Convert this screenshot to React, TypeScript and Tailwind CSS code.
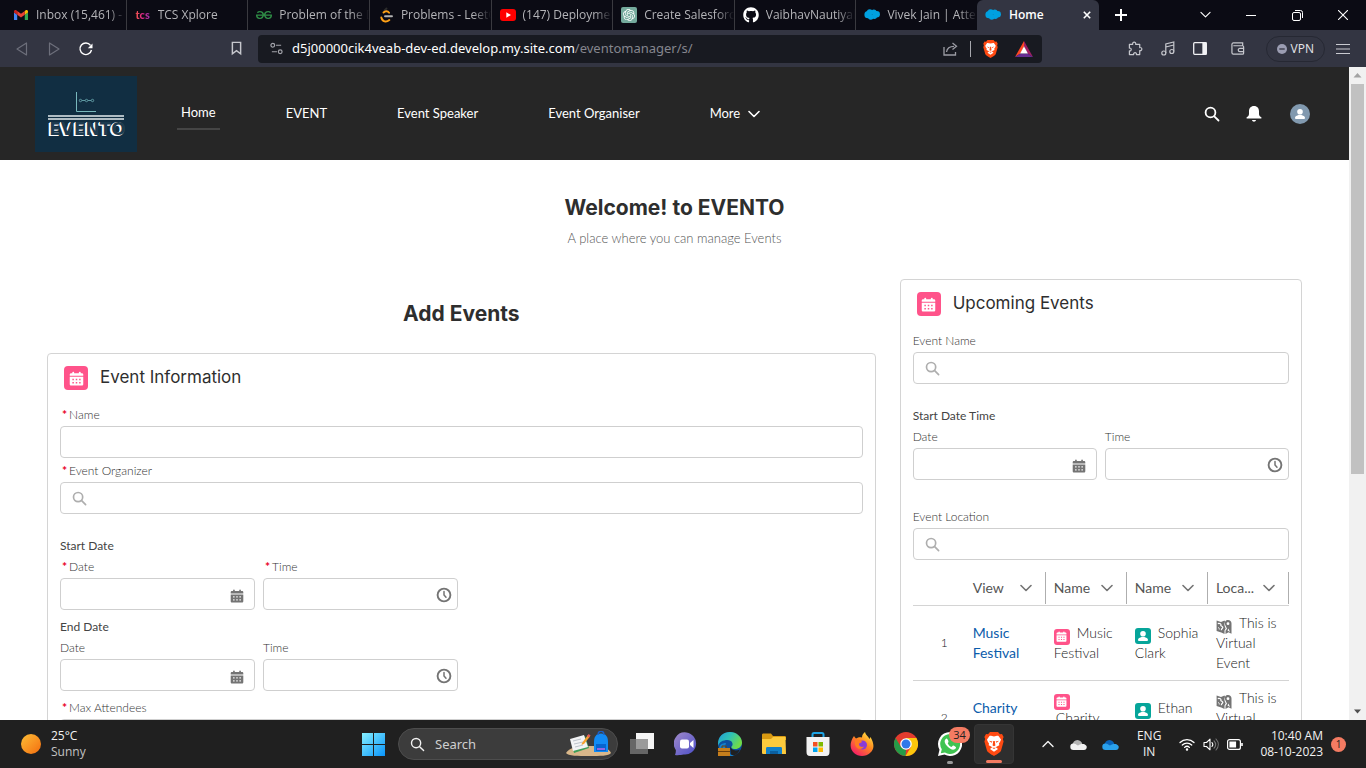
import type { ReactNode } from "react";
import { FaGithub } from "react-icons/fa";
import { SiGeeksforgeeks, SiOpenai } from "react-icons/si";

/* ---------- small drawings ---------- */

function Cloud({ className = "" }: { className?: string }) {
  return (
    <svg viewBox="0 0 24 17" className={className} fill="#00a1e0" aria-hidden="true">
      <circle cx="6" cy="8.5" r="5.4" />
      <circle cx="8.6" cy="4.8" r="4.4" />
      <circle cx="14.8" cy="4.8" r="4" />
      <circle cx="19" cy="7.9" r="4.9" />
      <circle cx="15.5" cy="11" r="4" />
      <circle cx="10.2" cy="12" r="4.2" />
    </svg>
  );
}

function Gmail() {
  return (
    <svg viewBox="0 0 24 18" className="w-[14px]" aria-hidden="true">
      <path fill="#4285f4" d="M0 3v13.4C0 17.3.7 18 1.6 18h3.9V8.2L0 4z" />
      <path fill="#34a853" d="M18.5 18h3.9c.9 0 1.6-.7 1.6-1.6V4l-5.5 4.2z" />
      <path fill="#fbbc04" d="M18.5 1.6v6.6L24 4.1V2.4c0-2-2.3-3.2-3.9-2z" />
      <path fill="#ea4335" d="M5.5 8.2V1.6L12 6.5l6.500-4.900v6.600L12 13z" />
      <path fill="#c5221f" d="M0 2.400v1.700l5.500 4.100V1.600L3.900.4C2.300-.8 0 .4 0 2.400z" />
    </svg>
  );
}

function LeetCode() {
  return (
    <svg viewBox="0 0 16 16" className="w-4" fill="none" strokeWidth="1.900" strokeLinecap="round" aria-hidden="true">
      <path d="M8.500 1.500 6.500 3.500" stroke="#2c2c2c" />
      <path d="M5.500 5.500c1.800-1.800 4.200-1.800 5.600.3" stroke="#ffa116" />
      <path d="M3.300 10.500c1 4.300 5 5 8 2.600" stroke="#ffa116" />
      <path d="M7 9.300h7" stroke="#b3b3b3" />
    </svg>
  );
}

function Youtube() {
  return (
    <svg viewBox="0 0 16 12" className="w-4" aria-hidden="true">
      <rect width="16" height="12" rx="3" fill="#f00" />
      <path d="M6.300 3.300v5.400L11 6z" fill="#fff" />
    </svg>
  );
}

function BraveLion({ className = "" }: { className?: string }) {
  return (
    <svg viewBox="0 0 20 24" className={className} aria-hidden="true">
      <path fill="#ff4a12" d="M6 0h8l2 2.200 2-.2 1.600 3-.8 2 .8 2.500-2.600 9.300c-.5 1.400-4 3.600-7 5.200-3-1.600-6.500-3.800-7-5.200L.4 9.500 1.200 7l-.8-2L2 2l2 .2z" />
      <path fill="#fff" d="M10 4.500c1.500 0 3.500-1 4.500-.5l2.500 3.500c-.2 1.500-1.500 3-2 4l.3 1.800-2.800 1.500c-.8.4-.4.900.3 1.300l1.200 1L10 19.800l-4-2.700 1.200-1c.7-.4 1.100-.9.3-1.300l-2.800-1.500.3-1.800c-.5-1-1.800-2.500-2-4L5.500 4c1-.5 3 .5 4.500.5z" />
      <path fill="#ff4a12" d="m4.800 8.700 3.600.8-.8 1.200zm10.400 0-3.600.8.8 1.200zM9.200 9h1.600l.6 4.500L10 14.200l-1.400-.7zM8 15.700l2 1.200 2-1.200-2 .1z" />
    </svg>
  );
}

function CalendarGlyph({ className = "" }: { className?: string }) {
  return (
    <svg viewBox="0 0 16 16" className={className} fill="currentColor" aria-hidden="true">
      <path d="M3.500 1.600c0-1.200 2-1.200 2 0v.7h5v-.7c0-1.200 2-1.200 2 0v.7h1.200c.9 0 1.500.6 1.500 1.400V5H.8V3.700c0-.8.6-1.400 1.500-1.400h1.200z" />
      <path fillRule="evenodd" d="M.8 6.200h14.400v7.900c0 .8-.6 1.400-1.500 1.400H2.300c-.9 0-1.500-.6-1.500-1.400zM3.600 8.200v1.600h1.600V8.200zm3.600 0v1.600h1.600V8.200zm3.600 0v1.600h1.600V8.200zM3.600 11.600v1.600h1.600v-1.600zm3.600 0v1.600h1.600v-1.600zm3.600 0v1.600h1.600v-1.600z" />
    </svg>
  );
}

function ClockGlyph() {
  return (
    <svg viewBox="0 0 16 16" className="w-4 text-[#747474]" fill="none" stroke="currentColor" strokeWidth="1.900" strokeLinecap="round" aria-hidden="true">
      <circle cx="8" cy="8" r="6.400" />
      <path d="M8 4.500V8l2 2.300" strokeWidth="1.500" />
    </svg>
  );
}

function SearchGlyph({ className = "", weight = 2 }: { className?: string; weight?: number }) {
  return (
    <svg viewBox="0 0 16 16" className={className} fill="none" stroke="currentColor" strokeWidth={weight} strokeLinecap="round" aria-hidden="true">
      <circle cx="6.500" cy="6.500" r="4.900" />
      <path d="m10.300 10.300 4.200 4.200" />
    </svg>
  );
}

function Chevron({ className = "", weight = 2 }: { className?: string; weight?: number }) {
  return (
    <svg viewBox="0 0 12 8" className={className} fill="none" stroke="currentColor" strokeWidth={weight} strokeLinecap="round" strokeLinejoin="round" aria-hidden="true">
      <path d="m1 1.500 5 5 5-5" />
    </svg>
  );
}

function Person({ className = "" }: { className?: string }) {
  return (
    <svg viewBox="0 0 12 12" className={className} fill="currentColor" aria-hidden="true">
      <circle cx="6" cy="3.700" r="2.800" />
      <path d="M1 9.800c0-1.700 2-2.300 3.600-2.800h2.800C9 7.500 11 8.100 11 9.800c0 .8-.5 1.200-1.200 1.200H2.200C1.500 11 1 10.600 1 9.800z" />
    </svg>
  );
}

function MapGlyph() {
  return (
    <svg viewBox="0 0 16 16" className="-my-1 inline-block w-4 align-[-3px] text-[#747474]" aria-hidden="true">
      <path fill="currentColor" d="M.6 1.600 5 3l3.500-1.600.6 1.400C7.600 5 8.600 7 9.700 9.500L8.500 11.500V15L5.300 13.500.6 12z" />
      <path fill="none" stroke="#fff" strokeWidth="1.200" d="M1.800 4.600c2-.6 3.700.4 3 1.600-.4.800 1.500.8 2 2 .3 1-1.300 1-1.500 3" />
      <path fill="none" stroke="#fff" strokeWidth=".9" d="M2 8.500c1 .2 1.500 1 1.300 2" />
      <path fill="currentColor" d="M12 1c2 0 3.500 1.500 3.500 3.400v10.400l-3-1.600L9.500 15v-3.200l1.500-2L9 5.500C8.300 3 9.700 1 12 1z" />
      <circle cx="12" cy="4.700" r="1.400" fill="#fff" />
      <path fill="#fff" d="M12.500 9.500 14 13l-2.500-1.500z" />
    </svg>
  );
}

/* ---------- browser chrome ---------- */

const tabs: { title: string; icon: ReactNode }[] = [
  { title: "Inbox (15,461) -", icon: <Gmail /> },
  { title: "TCS Xplore", icon: <span className="bg-linear-to-r from-[#f0563a] via-[#e0218a] to-[#9b2fae] bg-clip-text font-['Lato'] text-[11px] leading-4 font-black text-transparent">tcs</span> },
  { title: "Problem of the D", icon: <SiGeeksforgeeks className="size-4 text-[#2f8d46]" /> },
  { title: "Problems - LeetC", icon: <LeetCode /> },
  { title: "(147) Deploymen", icon: <Youtube /> },
  { title: "Create Salesforc", icon: <span className="flex size-4 items-center justify-center rounded-xs bg-[#74aa9c]"><SiOpenai className="size-3 text-white" /></span> },
  { title: "VaibhavNautiyal", icon: <FaGithub className="size-4 text-white" /> },
  { title: "Vivek Jain | Atten", icon: <Cloud className="w-4" /> },
];

function TabStrip() {
  return (
    <div className="flex h-[30px] shrink-0 items-stretch bg-[#0b0b14] text-[12px] text-[#b4b4b8]">
      <div className="flex w-[977px] min-w-0 pl-[5px]">
        {tabs.map((tab) => (
          <button key={tab.title} className="flex min-w-0 flex-1 items-center gap-[7px] border-r border-[#3a3a40] pl-2 text-left last:border-r-0">
            <span className="flex w-4 shrink-0 justify-center">{tab.icon}</span>
            <span className="min-w-0 flex-1 overflow-hidden mask-r-from-80% mask-r-to-100% whitespace-nowrap">{tab.title}</span>
          </button>
        ))}
      </div>
      <div className="flex w-[122px] shrink-0 items-center gap-2 rounded-t-md bg-[#333542] pr-1 pl-2 font-semibold text-white">
        <Cloud className="w-4" />
        <span className="flex-1">Home</span>
        <button aria-label="Close tab" className="flex size-4 items-center justify-center">
          <svg viewBox="0 0 10 10" className="w-2" stroke="#fff" strokeWidth="2"><path d="m1 1 8 8M9 1 1 9" /></svg>
        </button>
      </div>
      <button aria-label="New tab" className="flex w-11 items-center justify-center">
        <svg viewBox="0 0 12 12" className="w-3" stroke="#fff" strokeWidth="2"><path d="M6 0v12M0 6h12" /></svg>
      </button>
      <div className="ml-auto flex text-white">
        <button aria-label="Search tabs" className="flex w-[46px] items-center justify-center"><Chevron className="w-[11px]" weight={1.2} /></button>
        <button aria-label="Minimise" className="flex w-[46px] items-center justify-center">
          <svg viewBox="0 0 10 10" className="w-[10px]" stroke="#fff" strokeWidth="1"><path d="M0 5.500h10" /></svg>
        </button>
        <button aria-label="Restore" className="flex w-[46px] items-center justify-center">
          <svg viewBox="0 0 11 11" className="w-[11px]" fill="none" stroke="#fff"><rect x=".5" y="2.500" width="8" height="8" rx="1.500" /><path d="M3 .5h5.500a2 2 0 0 1 2 2V8" /></svg>
        </button>
        <button aria-label="Close window" className="flex w-[46px] items-center justify-center">
          <svg viewBox="0 0 10 10" className="w-[10px]" stroke="#fff" strokeWidth="1.100"><path d="m0 0 10 10M10 0 0 10" /></svg>
        </button>
      </div>
    </div>
  );
}

function Toolbar() {
  return (
    <div className="flex h-[37px] shrink-0 items-center bg-[#333542] px-4 text-[#c6c7cd]">
      <div className="flex w-[242px] shrink-0 items-center">
        <button aria-label="Back" className="flex w-8 text-[#6d6f7b]">
          <svg viewBox="0 0 12 14" className="w-3" fill="none" stroke="currentColor" strokeWidth="1.200" strokeLinejoin="round"><path d="M10.500 1v12L1 7z" /></svg>
        </button>
        <button aria-label="Forward" className="flex w-[30px] text-[#6d6f7b]">
          <svg viewBox="0 0 12 14" className="w-3" fill="none" stroke="currentColor" strokeWidth="1.200" strokeLinejoin="round"><path d="M1.500 1v12L11 7z" /></svg>
        </button>
        <button aria-label="Reload" className="flex text-white">
          <svg viewBox="0 0 16 16" className="w-4" fill="none" stroke="currentColor" strokeWidth="1.400"><path d="M12.500 4.300A5.800 5.800 0 1 0 13.500 9" /><path fill="currentColor" stroke="none" d="M14.500 2.500v4.700H9.800z" /></svg>
        </button>
        <button aria-label="Bookmark" className="mr-4 ml-auto flex">
          <svg viewBox="0 0 12 16" className="w-[11px]" fill="none" stroke="currentColor" strokeWidth="1.600"><path d="M1.500 1.500h9v12.500L6 10.500 1.500 14z" /></svg>
        </button>
      </div>
      <div className="flex h-7 min-w-0 flex-1 items-center rounded-sm bg-[#181a21] pr-[9px] pl-3">
        <svg viewBox="0 0 14 14" className="mr-[9px] w-[13px] shrink-0" fill="none" stroke="#a3a4ab" strokeWidth="1.300"><circle cx="3" cy="3.500" r="2" /><path d="M6.500 3.500H12M2 10.500h5.500" /><circle cx="11" cy="10.500" r="2" /></svg>
        <span className="flex-1 truncate font-['Noto_Sans',sans-serif] text-[13px] text-[#85868e]">
          <span className="text-white">d5j00000cik4veab-dev-ed.develop.my.site.com</span>/eventomanager/s/
        </span>
        <button aria-label="Share" className="mr-3 flex">
          <svg viewBox="0 0 15 14" className="w-[15px]" fill="none" stroke="#9b9ca4" strokeWidth="1.300"><path d="M1 5v8h11.500v-3" /><path d="M3.500 10C4 6.500 7 4.300 11 4.300M9.500 1l4 3.300-4 3.300" /></svg>
        </button>
        <span className="mr-3 h-4 w-px bg-[#a7a8ae]" />
        <button aria-label="Shields" className="mr-[17px] flex"><BraveLion className="w-[15px]" /></button>
        <button aria-label="Rewards" className="flex">
          <svg viewBox="0 0 18 16" className="w-[18px]"><path fill="#ff4724" d="M9 0 0 16l5.500-3.500L9 5.500z" /><path fill="#9e1f63" d="m9 0 9 16-5.500-3.500L9 5.500z" /><path fill="#662d91" d="m0 16 5.500-3.500h7L18 16z" /><path fill="#fff" d="m9 5.300 3.900 7.200H5.100z" /></svg>
        </button>
      </div>
      <div className="flex w-[308px] shrink-0 items-center justify-end">
        <button aria-label="Extensions" className="mr-[18px] flex">
          <svg viewBox="0 0 16 16" className="w-[15px]" fill="none" stroke="currentColor" strokeWidth="1.300" strokeLinejoin="round"><path d="M1.500 3.500H5c-.6-3 3.800-3 3.200 0h4.300V7c3-.6 3 3.800 0 3.200v4.300H9c.5-2.800-3.400-2.800-3 0H1.500v-4c2.600.5 2.600-3.500 0-3z" /></svg>
        </button>
        <button aria-label="Media" className="mr-[17px] flex">
          <svg viewBox="0 0 15 15" className="w-[15px]" fill="none" stroke="currentColor" strokeWidth="1.200"><circle cx="2.800" cy="12" r="2" /><circle cx="10.800" cy="10.500" r="2" /><path d="M4.800 12V3L12.800 1v9.500M4.800 6l8-2" /></svg>
        </button>
        <button aria-label="Sidebar" className="mr-6 flex">
          <svg viewBox="0 0 14 13" className="w-[14px]" fill="none" stroke="#f1f1f4" strokeWidth="1.300"><rect x=".7" y=".7" width="12.600" height="11.600" rx="1" /><path fill="#f1f1f4" d="M10 1h3v11h-3z" /></svg>
        </button>
        <button aria-label="Wallet" className="mr-[21px] flex">
          <svg viewBox="0 0 15 14" className="w-[14px]" fill="none" stroke="currentColor" strokeWidth="1.300"><path d="M12.500 4V1H2.500a1.500 1.500 0 0 0-1.500 1.500v9A1.500 1.500 0 0 0 2.500 13h10a1 1 0 0 0 1-1V5a1 1 0 0 0-1-1H2.500" /><path d="M14 6.800H9.500a1.700 1.700 0 0 0 0 3.500H14" /></svg>
        </button>
        <button className="mr-[11px] flex h-[26px] items-center gap-1 rounded-full border border-[#262833] px-[10px] text-[12px] text-[#e4e5ea]">
          <svg viewBox="0 0 10 10" className="w-[10px]"><circle cx="5" cy="5" r="5" fill="#9b9db2" /><path d="M2.300 5h5.400" stroke="#333542" strokeWidth="1.300" /></svg>
          VPN
        </button>
        <button aria-label="Menu" className="flex w-[14px]">
          <svg viewBox="0 0 14 12" className="w-[14px]" stroke="#c9cad0" strokeWidth="1.200"><path d="M0 1.500h14M0 6h14M0 10.500h14" /></svg>
        </button>
      </div>
    </div>
  );
}

/* ---------- site header ---------- */

function SiteHeader() {
  const link = "flex h-8 items-center px-1 text-white";
  return (
    <header className="flex h-[93px] items-center bg-[#262626] pr-[39px] pl-[35px] text-[13px]">
      <a href="#home" aria-label="Evento" className="flex h-[76px] w-[102px] flex-col items-center bg-[#112e42] pt-4">
        <svg viewBox="0 0 76 28" className="w-[76px]" fill="none">
          <path d="M28.500 0v19.500H48" stroke="#79b8bd" />
          <g stroke="#5f9aa3"><circle cx="32.500" cy="8.500" r="1.200" /><circle cx="38.500" cy="8.500" r="1.200" /><circle cx="44.500" cy="8.500" r="1.200" /><path d="M34 8.500h3M40 8.500h3" /></g>
          <path d="M0 24h76M0 27h76" stroke="#e3ecee" strokeWidth="1.400" />
        </svg>
        <span className="pl-[3px] font-['DejaVu_Sans'] text-[17px] leading-[18px] font-bold text-[#1d3b4f] [text-shadow:-1px_0_#fff,-1px_1px_#fff,-2px_1px_#fff]">EVENTO</span>
      </a>
      <nav className="ml-10 flex items-center gap-[62px]">
        <a href="#home" className="flex h-8 items-center border-b-2 border-[#454545] px-1 text-white">Home</a>
        <a href="#event" className={link}>EVENT</a>
        <a href="#speaker" className={link}>Event Speaker</a>
        <a href="#organiser" className={link}>Event Organiser</a>
        <button className={link}>More <Chevron className="ml-2 w-3" weight={1.6} /></button>
      </nav>
      <div className="ml-auto flex items-center text-white">
        <button aria-label="Search" className="mr-[26px]"><SearchGlyph className="w-4" weight={1.8} /></button>
        <button aria-label="Notifications" className="mr-7">
          <svg viewBox="0 0 16 16" className="w-4" fill="currentColor"><path d="M8 0C4.700 0 3 2.300 3 5.200v2.600c0 1.600-.6 2.700-2 3.300-.6.300-.7 1.400.2 1.400h13.600c.9 0 .8-1.100.2-1.400-1.400-.6-2-1.700-2-3.300V5.200C13 2.300 11.300 0 8 0zM6 14h4c-.3 2.300-3.700 2.300-4 0z" /></svg>
        </button>
        <button aria-label="Profile" className="flex size-5 items-center justify-center rounded-full bg-[#8199af]"><Person className="w-3" /></button>
      </div>
    </header>
  );
}

/* ---------- form parts ---------- */

function Field({ id, label, required, icon }: { id: string; label: string; required?: boolean; icon?: "search" | "date" | "time" }) {
  return (
    <div className="min-w-0 flex-1">
      <label htmlFor={id} className="flex h-[22px] items-center text-[12px] font-light text-[#333]">
        {required && <span className="mr-[2px] ml-[2px] font-bold text-[#ea001e]">*</span>}
        {label}
      </label>
      <div className="flex h-8 items-center rounded-sm border border-[#cfcfcf] bg-white">
        {icon === "search" && <SearchGlyph className="ml-[11px] w-[15px] shrink-0 text-[#aeaeae]" weight={1.8} />}
        <input id={id} type="text" className="h-full min-w-0 flex-1 px-3 text-[13px] outline-none" />
        {icon === "date" && <CalendarGlyph className="mt-1 mr-[10px] w-[14px] shrink-0 text-[#747474]" />}
        {icon === "time" && <span className="mr-[5px] shrink-0 pt-[2px]"><ClockGlyph /></span>}
      </div>
    </div>
  );
}

function GroupTitle({ children }: { children: ReactNode }) {
  return <h3 className="h-5 text-[12px] leading-5 text-[#444]">{children}</h3>;
}

function CardTitle({ children }: { children: ReactNode }) {
  return (
    <div className="mb-[14px] flex h-6 items-center gap-3 px-1">
      <span className="flex size-6 items-center justify-center rounded-sm bg-[#ff538a] text-white"><CalendarGlyph className="w-[15px]" /></span>
      <h2 className="font-['Inter',sans-serif] text-[17px] text-[#2e2e2e]">{children}</h2>
    </div>
  );
}

const card = "rounded-sm border border-[#d4d4d4] bg-white p-3";

function EventForm() {
  return (
    <section className={card}>
      <CardTitle>Event Information</CardTitle>
      <Field id="name" label="Name" required />
      <div className="mt-[2px]"><Field id="organizer" label="Event Organizer" required icon="search" /></div>
      <div className="mt-[22px] w-1/2 max-w-[398px]">
        <GroupTitle>Start Date</GroupTitle>
        <div className="flex gap-2">
          <Field id="start-date" label="Date" required icon="date" />
          <Field id="start-time" label="Time" required icon="time" />
        </div>
      </div>
      <div className="mt-[7px] w-1/2 max-w-[398px]">
        <GroupTitle>End Date</GroupTitle>
        <div className="flex gap-2">
          <Field id="end-date" label="Date" icon="date" />
          <Field id="end-time" label="Time" icon="time" />
        </div>
      </div>
      <div className="mt-[6px]"><Field id="max" label="Max Attendees" required /></div>
    </section>
  );
}

/* ---------- upcoming events ---------- */

const rows = [
  { view: "Music Festival", name: "Music Festival", speaker: "Sophia Clark" },
  { view: "Charity Gala", name: "Charity\u00a0 Gala", speaker: "Ethan Clark", wrap: true },
];

function UpcomingEvents() {
  const badge = "-my-1 mr-[7px] inline-flex size-4 items-center justify-center rounded-[3px] align-[-4px] text-white";
  return (
    <section className={card}>
      <CardTitle>Upcoming Events</CardTitle>
      <Field id="event-name" label="Event Name" icon="search" />
      <div className="mt-[22px]">
        <GroupTitle>Start Date Time</GroupTitle>
        <div className="flex gap-2">
          <Field id="from-date" label="Date" icon="date" />
          <Field id="from-time" label="Time" icon="time" />
        </div>
      </div>
      <div className="mt-[26px]"><Field id="location" label="Event Location" icon="search" /></div>
      <table className="mt-3 w-full table-fixed border-collapse text-left text-[14px] leading-5 font-light text-[#181818]">
        <thead>
          <tr className="border-b border-[#d4d4d4]">
            <th className="w-[52px] p-0"><span className="sr-only">Row</span></th>
            {["View", "Name", "Name", "Loca..."].map((title, i) => (
              <th key={i} className="p-0 pb-[1px] font-normal text-[#555]">
                <span className="flex h-8 items-center justify-between border-r border-[#aeaeae] pr-[13px] pl-2">
                  {title}
                  <button aria-label={`${title} column actions`}><Chevron className="w-3 text-[#747474]" weight={1.6} /></button>
                </span>
              </th>
            ))}
          </tr>
        </thead>
        <tbody>
          {rows.map((row, i) => (
            <tr key={row.view} className="h-[75px] border-b border-[#d4d4d4]">
              <td className="pr-[17px] text-right text-[12px]">{i + 1}</td>
              <td className="px-2"><a href="#view" className="font-normal text-[#0b5cab]">{row.view}</a></td>
              <td className="px-2">
                <span className={`${badge} bg-[#ff538a]`}><CalendarGlyph className="w-[11px]" /></span>
                {row.wrap && <br />}
                {row.wrap ? <span className="pl-[2px]">{row.name}</span> : row.name}
              </td>
              <td className="px-2">
                <span className={`${badge} bg-[#06a59a]`}><Person className="w-3" /></span>
                {row.speaker}
              </td>
              <td className="px-2"><MapGlyph /><span className="ml-[7px]">This is Virtual Event</span></td>
            </tr>
          ))}
        </tbody>
      </table>
    </section>
  );
}

function PageScrollbar() {
  return (
    <div className="flex w-[17px] shrink-0 flex-col items-center bg-[#f1f1f1]">
      <svg viewBox="0 0 17 17" className="w-[17px]"><path d="M4.500 10.500h8l-4-4.500z" fill="#a3a3a3" /></svg>
      <div className="w-[13px] flex-[63] bg-[#c1c1c1]" />
      <div className="flex-[37]" />
      <svg viewBox="0 0 17 17" className="w-[17px]"><path d="M5 6.500h7l-3.500 4z" fill="#505050" /></svg>
    </div>
  );
}

/* ---------- taskbar ---------- */

function WinLogo() {
  return (
    <svg viewBox="0 0 23 23" className="w-[23px]">
      <defs><linearGradient id="win" x1="0" y1="0" x2="1" y2="1"><stop stopColor="#86f0ff" /><stop offset="1" stopColor="#0894fb" /></linearGradient></defs>
      <path fill="url(#win)" d="M0 0h11v11H0zM12 0h11v11H12zM0 12h11v11H0zM12 12h11v11H12z" />
    </svg>
  );
}

function SearchArt() {
  return (
    <svg viewBox="0 0 46 26" className="w-[46px]">
      <path d="M0 22c3-5 11-7 23-7s20 2 22 7c-2 3-11 3-22 3S2 25 0 22z" fill="#d9b78a" />
      <path d="m5 9 14-4 4 12-15 5z" fill="#3f9e58" /><path d="m4 8 14-4 4 12-15 4z" fill="#f2f3f5" />
      <path d="m7 10 8-2M8 13l9-2M9 16l8-2" stroke="#a5adb8" strokeWidth=".7" />
      <path d="m16 12 6-8 2 1.500-6 7.500-2.500.8z" fill="#f5a12f" /><path d="m21 5 1.600-2 2 1.500L23 6.500z" fill="#e35858" />
      <path d="M28 11c0-5 2-8.500 7-8.500S42 6 42 11v10H28z" fill="#128bf4" /><path d="M32 4c0-5 6-5 6 0" fill="none" stroke="#1b61c9" strokeWidth="1.500" />
      <path d="M30 13h10v7H30z" fill="#0764cf" /><path d="M31 18h8" stroke="#c267e8" strokeWidth="1.500" />
    </svg>
  );
}

const apps: { name: string; art: ReactNode }[] = [
  {
    name: "Task view",
    art: <svg viewBox="0 0 24 24" className="w-6"><path d="M6 1h18v16H6z" fill="#f4f4f4" /><path d="M0 7h18v15H0z" fill="#666" /><path d="M6 7h12v10H6z" fill="#9a9a9a" /></svg>,
  },
  {
    name: "Chat",
    art: <svg viewBox="0 0 24 24" className="w-6"><defs><linearGradient id="chat" x1="0" y1="0" x2="1" y2="1"><stop stopColor="#a18ac9" /><stop offset="1" stopColor="#4b4ec9" /></linearGradient></defs><path fill="url(#chat)" d="M12.500.5a11 11 0 1 1-3 22c-2 .4-5.300 1-8.500.5.700-2 1-3.600.8-5A11.200 11.200 0 0 1 12.500.5z" /><rect x="6" y="7.500" width="9" height="9" rx="2" fill="#fff" /><path d="m16 11 3.500-3v8L16 13z" fill="#fff" /></svg>,
  },
  {
    name: "Edge",
    art: <svg viewBox="0 0 24 24" className="w-6"><defs><linearGradient id="edge" x1="0" y1="0" x2="1" y2=".5"><stop stopColor="#219bd8" /><stop offset=".5" stopColor="#2fc2b5" /><stop offset="1" stopColor="#71db47" /></linearGradient></defs><circle cx="12" cy="12" r="12" fill="#0d4f9e" /><path fill="url(#edge)" d="M0 12C0 4 5.500 0 12 0s12 5 12 10.500c0 4-3 6.500-7 6.500-3 0-4.500-1.500-3-3 1.500-2 0-6-4.500-6S1 10 0 14z" /><path d="M12 14c1 4 5 5.500 10 3.500C20 22 16 24 13 24" fill="#202020" /><path d="M8 11c-2 5 1 11 8 12.500C9 26 3 22 1 17c0-4 3-6 7-6z" fill="#1380cc" /><path fill="#c77f1c" d="M0 16h12v8H0z" /><path d="M4 16v-2h4v2M0 19.500h12" fill="none" stroke="#6e3f0b" /></svg>,
  },
  {
    name: "Files",
    art: <svg viewBox="0 0 24 24" className="w-6"><path d="M0 3c0-1 .5-1.500 1.500-1.500H9L11 4h11.500C23.500 4 24 4.500 24 5.500V8H0z" fill="#d99a12" /><path d="M0 7h9l2-2h12.500l.5 17H1.500C.5 22 0 21.500 0 21z" fill="#fcca3d" /><path d="M4 22v-5.500c0-1 .5-1.500 1.500-1.500h13c1 0 1.500.5 1.500 1.500V22z" fill="#117fc8" /><path d="M8 19h8v3H8z" fill="#0b5f9f" /></svg>,
  },
  {
    name: "Store",
    art: <svg viewBox="0 0 24 24" className="w-6"><path d="M6.500 6V2.500c0-1 .5-1.500 1.500-1.500h8c1 0 1.500.5 1.500 1.500V6" fill="none" stroke="#1ca4e5" strokeWidth="2" /><path d="M.5 5h23v15c0 2.500-1 4-3.500 4H4C1.500 24 .5 22.500.5 20z" fill="#f2f2f2" /><path fill="#f25022" d="M7 10h4.500v4.500H7z" /><path fill="#7fba00" d="M12.500 10H17v4.500h-4.500z" /><path fill="#00a4ef" d="M7 15.500h4.500V20H7z" /><path fill="#ffb900" d="M12.500 15.500H17V20h-4.500z" /></svg>,
  },
  {
    name: "Firefox",
    art: <svg viewBox="0 0 24 24" className="w-6"><defs><linearGradient id="fox" x1=".9" y1="0" x2=".2" y2="1"><stop stopColor="#fff14a" /><stop offset=".45" stopColor="#ff8a1f" /><stop offset="1" stopColor="#f5156c" /></linearGradient></defs><path fill="url(#fox)" d="M4 4c.5 1 1 1.800 2 2.500C8.500 5 10 5 12 5.500 12 3 13 1.500 15 0c.5 3 3 4 4.500 7l1-2c4 7 4 12-.5 16-4 4-12 4-16 0C-.5 17-.5 10 4 4z" /><circle cx="12.500" cy="13" r="4.500" fill="#8a3bd6" /><path d="M5 8c4-1 6 0 7 2-1 1-3 .5-3 2.500s3 3 5 2c-2 4-8 3-9-2z" fill="#ff7b21" /></svg>,
  },
  {
    name: "Chrome",
    art: <svg viewBox="0 0 24 24" className="w-6"><circle cx="12" cy="12" r="12" fill="#e33b2e" /><path d="M1.600 6 7 15l5 3-.5 6A12 12 0 0 1 1.600 6z" fill="#249b48" /><path d="M17 15 11.500 24A12 12 0 0 0 22.400 6H12v6z" fill="#fdc70c" /><circle cx="12" cy="12" r="5.800" fill="#fff" /><circle cx="12" cy="12" r="4.500" fill="#3078e9" /></svg>,
  },
];

function Taskbar() {
  return (
    <footer className="flex h-12 shrink-0 items-center bg-[#202020] text-[12px] leading-4 text-[#f2f2f2]">
      <div className="flex w-[362px] min-w-0 items-center gap-[10px] pl-[21px]">
        <span className="size-5 rounded-full bg-linear-to-br from-[#fbbd35] to-[#f26b0c]" />
        <span>25°C<br /><span className="text-[#c3c3c3]">Sunny</span></span>
      </div>
      <button aria-label="Start" className="mr-[13px]"><WinLogo /></button>
      <div className="flex h-8 w-[220px] items-center rounded-full border border-[#4d4d4d] bg-[#3c3c3c] pr-[5px] pl-[11px]">
        <SearchGlyph className="w-[15px] shrink-0" weight={1.5} />
        <input aria-label="Search" placeholder="Search" className="ml-[10px] min-w-0 flex-1 font-['Noto_Sans',sans-serif] text-[13px] outline-none placeholder:text-[#cfcfcf]" />
        <SearchArt />
      </div>
      <div className="ml-[2px] flex items-center">
        {apps.map((app) => (
          <button key={app.name} aria-label={app.name} className="flex w-11 justify-center">{app.art}</button>
        ))}
        <button aria-label="WhatsApp" className="relative flex h-10 w-11 items-center justify-center">
          <svg viewBox="0 0 24 24" className="w-6"><path fill="#fff" d="M12 0a12 12 0 1 1-5.500 22.600L0 24l1.500-6.200A12 12 0 0 1 12 0z" /><path fill="#3fc351" d="M12 2a10 10 0 1 1-5 18.600L2.800 21.300l1-4A10 10 0 0 1 12 2z" /><path fill="#fff" d="M8.500 6.500c-3 1.500-2 5 1 8s6.500 4.500 8.500 1.500c.5-1-2-2.500-3-2.500l-1.500 1.500c-1.500-.5-3-2-3.800-3.800L10.500 10c.2-.7-1-3.500-2-3.500z" /></svg>
          <span className="absolute top-[3px] left-[21px] flex h-4 w-[21px] items-center justify-center rounded-full bg-[#f47b62] text-[11px] text-[#222]">34</span>
          <span className="absolute bottom-0 h-[3px] w-[6px] rounded-full bg-[#999]" />
        </button>
        <button aria-label="Brave" className="relative ml-[2px] flex h-10 w-10 items-center justify-center rounded-sm border border-[#353535] bg-[#2e2e2e]">
          <BraveLion className="w-5" />
          <span className="absolute bottom-0 h-[3px] w-4 rounded-full bg-[#f47b62]" />
        </button>
      </div>
      <div className="ml-auto flex items-center pr-5">
        <button aria-label="Hidden icons" className="mr-4"><Chevron className="w-3 rotate-180" weight={1.4} /></button>
        <svg viewBox="0 0 17 11" className="mr-[15px] w-[17px]"><path fill="#b5b5b5" d="M3 8a4.500 4.500 0 0 1 9-4l1 4z" /><path fill="#f3f3f3" d="M3.500 11a3.200 3.200 0 0 1 0-6.400c2 0 3 1.400 4.500 2 2-2 7-2.600 8.500.4.800 2-.5 4-2.500 4z" /></svg>
        <svg viewBox="0 0 17 11" className="mr-[18px] w-[17px]"><path fill="#0a63b9" d="M3 8a4.500 4.500 0 0 1 9-4l1 4z" /><path fill="#2aa1ec" d="M3.500 11a3.200 3.200 0 0 1 0-6.400c2 0 3 1.400 4.500 2 2-2 7-2.600 8.500.4.800 2-.5 4-2.500 4z" /></svg>
        <span className="mr-[18px] text-center">ENG<br />IN</span>
        <svg viewBox="0 0 16 13" className="mr-2 w-4" fill="none" stroke="#fff" strokeWidth="1.300" strokeLinecap="round"><path d="M1 4.500a10 10 0 0 1 14 0M3.300 7a6.700 6.700 0 0 1 9.400 0M5.600 9.400a3.400 3.400 0 0 1 4.800 0" /><circle cx="8" cy="11.500" r=".6" fill="#fff" /></svg>
        <svg viewBox="0 0 16 13" className="mr-2 w-4" fill="none" stroke="#fff" strokeWidth="1.100" strokeLinejoin="round" strokeLinecap="round"><path d="M1 4.500h2.500L7 1.200v10.600L3.500 8.500H1zM9 4.500c1 1.200 1 2.800 0 4" /><path d="M11 2.800c2 2.200 2 5.200 0 7.400M13 1c3 3.300 3 7.700 0 11" stroke="#777" /></svg>
        <svg viewBox="0 0 16 11" className="mr-[17px] w-4" fill="none" stroke="#fff" strokeWidth="1.200"><rect x=".6" y=".6" width="12.800" height="9.800" rx="2" /><path d="M3 3h5.500v5H3z" fill="#fff" /><path d="M15 4v3" strokeWidth="1.600" /></svg>
        <span className="mr-2 text-right">10:40 AM<br />08-10-2023</span>
        <span className="flex size-[15px] items-center justify-center rounded-full bg-[#f47b62] text-[10px] text-[#222]">1</span>
      </div>
    </footer>
  );
}

export default function App() {
  return (
    <div className="flex h-screen flex-col overflow-hidden bg-white font-['Open_Sans','Noto_Sans',sans-serif]">
      <TabStrip />
      <Toolbar />
      <div className="flex min-h-0 flex-1">
        <div className="min-w-0 flex-1 overflow-hidden font-['Lato',sans-serif]">
          <SiteHeader />
          <main className="px-[47px]">
            <div className="pt-[34px] text-center">
              <h1 className="font-['Inter',sans-serif] text-[21px] leading-7 font-bold text-[#2e2e2e]">Welcome! to EVENTO</h1>
              <p className="mt-[6px] text-[13px] leading-5 font-light text-[#555]">A place where you can manage Events</p>
            </div>
            <div className="mt-[31px] grid grid-cols-3 items-start gap-6">
              <div className="col-span-2">
                <h2 className="mt-[21px] mb-[25px] text-center font-['Inter',sans-serif] text-[21px] leading-7 font-bold text-[#2e2e2e]">Add Events</h2>
                <EventForm />
              </div>
              <UpcomingEvents />
            </div>
          </main>
        </div>
        <PageScrollbar />
      </div>
      <Taskbar />
    </div>
  );
}
